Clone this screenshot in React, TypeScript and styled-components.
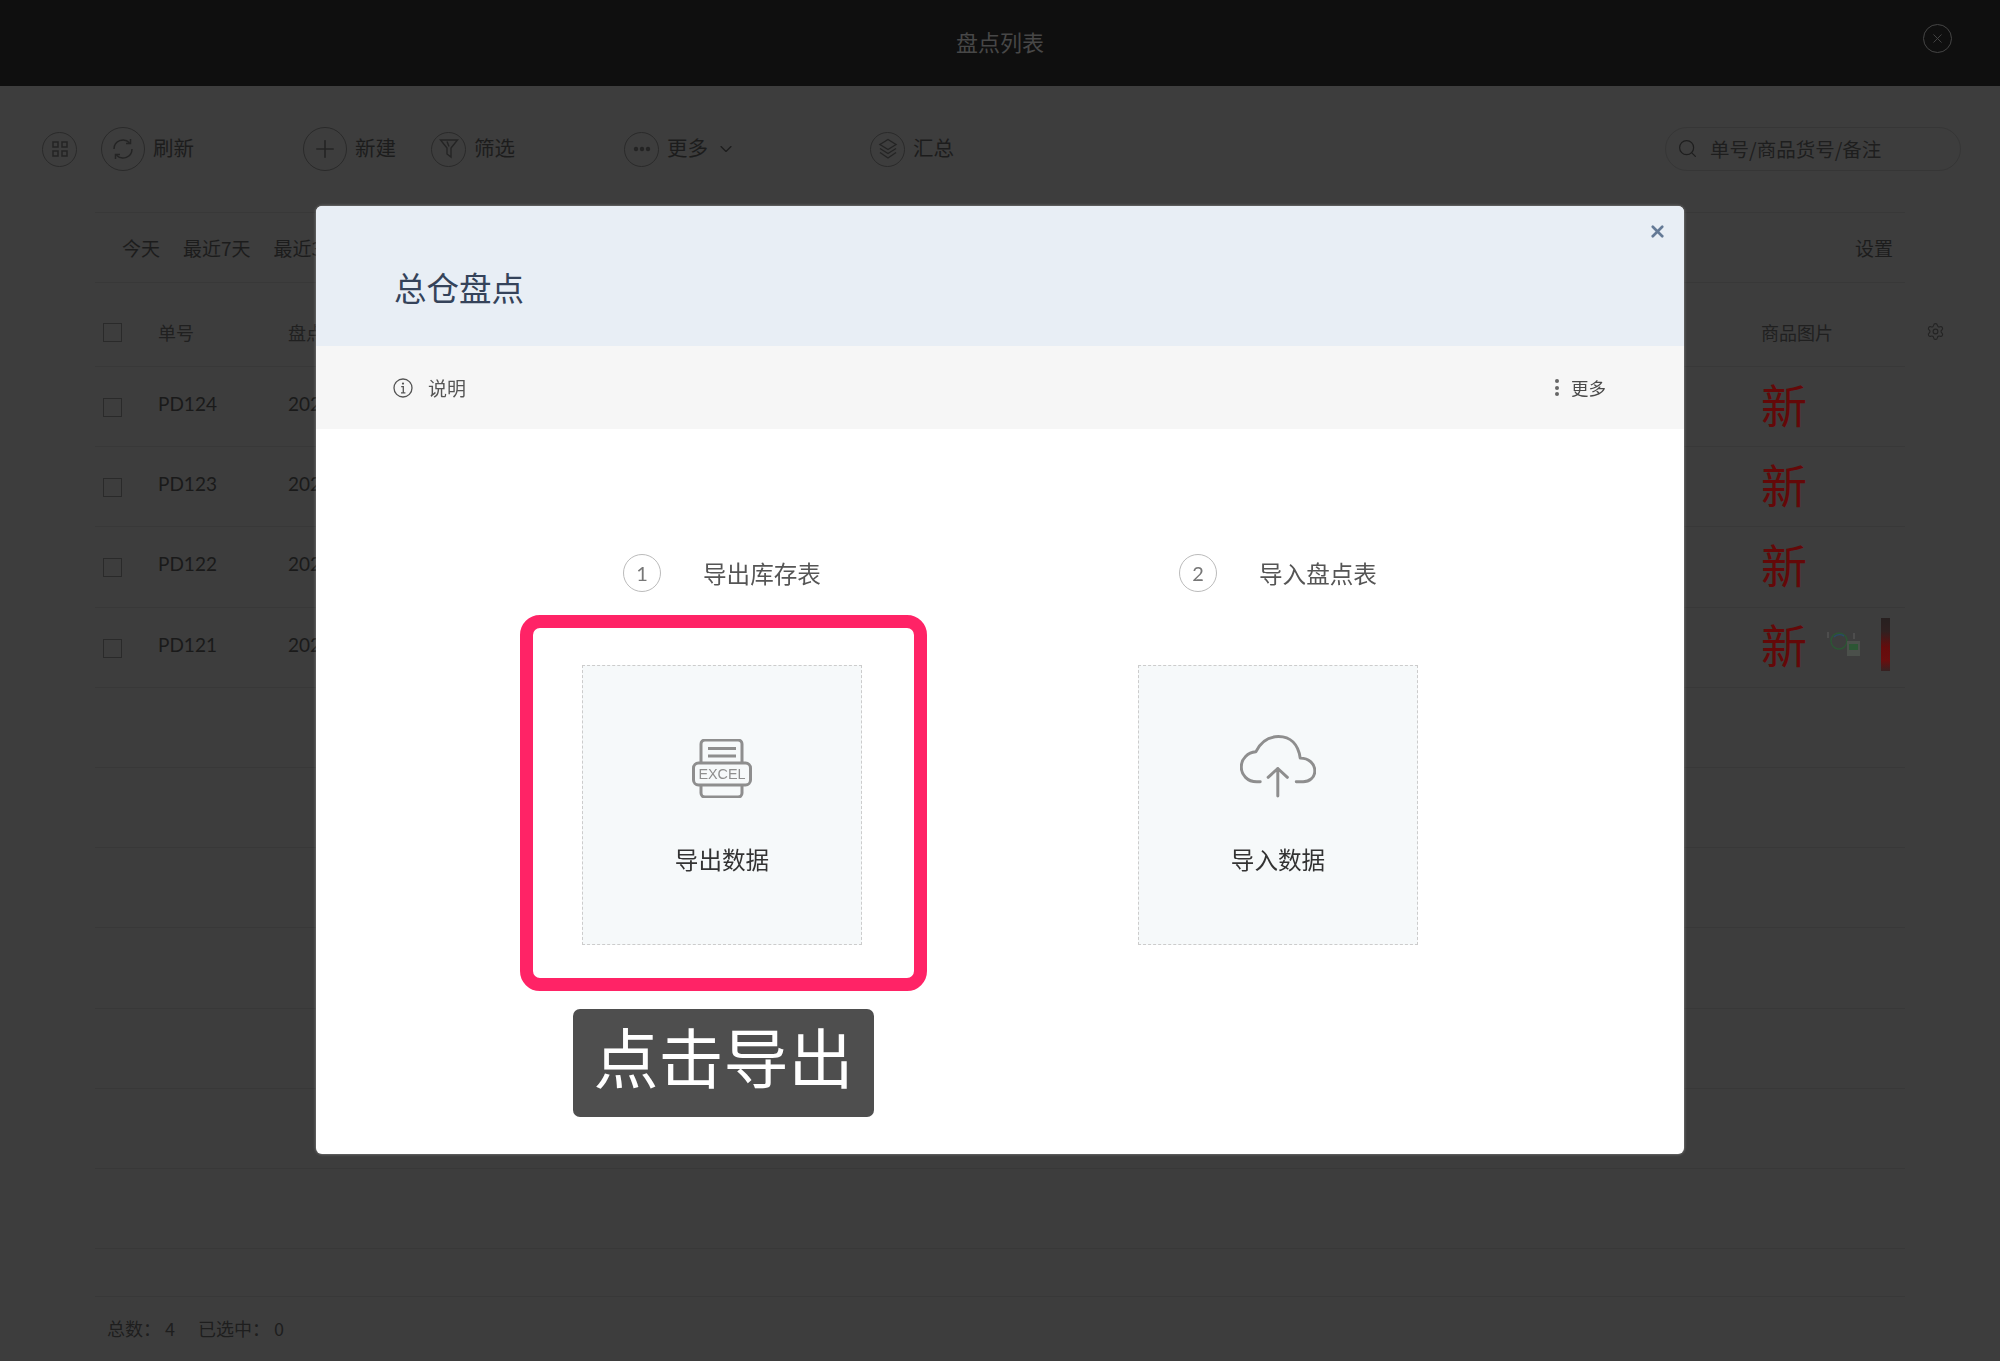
import styled, { createGlobalStyle } from "styled-components";
import { ChevronDown, Plus, Search, Settings, X } from "lucide-react";

const GlobalStyle = createGlobalStyle`
  html, body {
    margin: 0;
    padding: 0;
    width: 2000px;
    height: 1361px;
    overflow: hidden;
    background: #3d3d3d;
    font-family: "Noto Sans CJK SC", "Noto Sans", sans-serif;
  }
  * { box-sizing: border-box; }
`;

const Page = styled.div`
  width: 2000px;
  height: 1361px;
  display: flex;
  flex-direction: column;
  background: #3d3d3d;
  color: #1c1c1c;
`;

const TopBar = styled.header`
  height: 86px;
  flex: none;
  display: grid;
  grid-template-columns: 1fr auto 1fr;
  align-items: center;
  background: #0f0f0f;
`;

const TopTitle = styled.div`
  grid-column: 2;
  margin-bottom: 5px;
  font-size: 22px;
  color: #474747;
`;

const TopClose = styled.div`
  justify-self: end;
  width: 29px;
  height: 29px;
  margin: 0 48px 10px 0;
  border: 1.5px solid #454545;
  border-radius: 50%;
  display: flex;
  align-items: center;
  justify-content: center;
  color: #454545;
`;

const Toolbar = styled.div`
  height: 126px;
  flex: none;
  position: relative;
  padding-top: 41px;
  display: flex;
  align-items: flex-start;
`;

const ToolGroup = styled.div<{ $left: number }>`
  display: flex;
  align-items: center;
  height: 44px;
  margin-left: ${(p) => p.$left}px;
  gap: 8px;
`;

const RoundIcon = styled.div<{ $size?: number }>`
  width: ${(p) => p.$size ?? 35}px;
  height: ${(p) => p.$size ?? 35}px;
  flex: none;
  border: 1.5px solid #2a2a2a;
  border-radius: 50%;
  display: flex;
  align-items: center;
  justify-content: center;
  color: #242424;
`;

const ToolLabel = styled.span`
  padding-bottom: 3px;
  font-size: 20.5px;
  line-height: 41px;
  color: #1c1c1c;
  white-space: nowrap;
`;

const SearchBox = styled.div`
  margin-left: auto;
  margin-right: 39px;
  width: 296px;
  height: 44px;
  padding: 0 0 2px 11px;
  border: 1.5px solid #363636;
  border-radius: 22px;
  display: flex;
  align-items: center;
  gap: 12px;
  font-size: 19.5px;
  color: #1e1e1e;
`;

const TableArea = styled.div`
  margin: 0 95px;
  flex: 1;
  display: flex;
  flex-direction: column;
  border-top: 1px solid #383838;
`;

const QuickRow = styled.div`
  height: 70px;
  flex: none;
  display: flex;
  align-items: center;
  padding: 0 12px 0 27px;
  gap: 23px;
  font-size: 19px;
  color: #1c1c1c;
  border-bottom: 1px solid #383838;
`;

const QuickEnd = styled.span`
  margin-left: auto;
`;

const gridColumns = "55px 130px 1fr 144px";

const HeadRow = styled.div`
  height: 84px;
  flex: none;
  padding: 14px 0 0 8px;
  display: grid;
  grid-template-columns: ${gridColumns};
  align-items: center;
  font-size: 18px;
  color: #202020;
  border-bottom: 1px solid #383838;
`;

const Row = styled.div<{ $short?: boolean }>`
  height: ${(p) => (p.$short ? 48 : 80.2)}px;
  flex: none;
  padding-left: 8px;
  display: grid;
  grid-template-columns: ${gridColumns};
  align-items: center;
  font-family: Lato, "Noto Sans CJK SC", sans-serif;
  font-size: 19px;
  color: #1a1a1a;
  border-bottom: 1px solid #383838;
`;

const RowText = styled.span`
  margin-bottom: 6px;
`;

const Check = styled.span`
  width: 19px;
  height: 19px;
  margin-top: 2px;
  border: 1.5px solid #2a2a2a;
  display: block;
`;

const ImageHead = styled.div`
  display: flex;
  align-items: center;
  justify-content: space-between;
  margin-right: -40px;
`;

const ImageCell = styled.div`
  display: flex;
  align-items: center;
`;

const NewMark = styled.span`
  width: 46px;
  margin-bottom: 8px;
  font-family: "Noto Sans CJK SC", sans-serif;
  font-weight: 400;
  font-size: 46px;
  line-height: 46px;
  color: #640808;
`;

const Thumb = styled.svg`
  margin: 0 0 6px 18px;
  flex: none;
`;

const Strip = styled.span`
  width: 9px;
  height: 53px;
  margin: 0 0 6px 19px;
  background: linear-gradient(180deg, #272020 0%, #2f2020 25%, #650c0c 55%, #6a0e0e 80%, #352222 100%);
`;

const Footer = styled.div`
  flex: 1;
  display: flex;
  align-items: center;
  padding: 0 0 2px 12px;
  font-size: 18px;
  color: #1e1e1e;
  gap: 23px;
`;

const FooterItem = styled.span`
  display: flex;
  gap: 4px;
`;

const Overlay = styled.div`
  position: fixed;
  top: 0;
  left: 0;
  right: 0;
  bottom: 0;
  padding: 206px 0 0 316px;
`;

const Modal = styled.section`
  width: 1368px;
  height: 948px;
  background: #fff;
  border-radius: 6px;
  box-shadow: 0 0 3px rgba(255, 255, 255, 0.45);
  display: flex;
  flex-direction: column;
`;

const ModalHead = styled.div`
  height: 140px;
  flex: none;
  position: relative;
  display: flex;
  align-items: center;
  padding: 20px 0 0 78px;
  background: #e8eef5;
  border-radius: 6px 6px 0 0;
`;

const ModalTitle = styled.h2`
  margin: 0;
  font-size: 32.5px;
  font-weight: 400;
  color: #35435a;
`;

const ModalClose = styled.span`
  position: absolute;
  top: 16px;
  right: 17px;
  display: flex;
  color: #647a96;
`;

const InfoBar = styled.div`
  height: 83px;
  flex: none;
  display: flex;
  align-items: center;
  padding: 0 78px 0 77px;
  background: #f6f6f6;
  font-size: 19px;
  color: #555;
`;

const InfoLabel = styled.span`
  margin-left: 15px;
`;

const MoreButton = styled.span`
  margin-left: auto;
  display: flex;
  align-items: center;
  gap: 12px;
  font-size: 17.5px;
  color: #4a4a4a;
`;

const Dots = styled.span`
  width: 4px;
  display: flex;
  flex-direction: column;
  gap: 2.5px;

  i {
    width: 4px;
    height: 4px;
    border-radius: 50%;
    background: #666;
  }
`;

const Steps = styled.div`
  flex: 1;
  display: flex;
  padding: 125px 0 0 266px;
  gap: 276px;
`;

const StepColumn = styled.div`
  width: 280px;
`;

const StepHead = styled.div`
  height: 38px;
  margin-bottom: 73px;
  padding-left: 41px;
  display: flex;
  align-items: center;
  gap: 42px;
  font-size: 23.6px;
  color: #555;
  white-space: nowrap;
`;

const StepNumber = styled.span`
  width: 38px;
  height: 38px;
  flex: none;
  border: 1.5px solid #bbb;
  border-radius: 50%;
  display: flex;
  align-items: center;
  justify-content: center;
  font-family: Lato, sans-serif;
  font-size: 20px;
  color: #777;
`;

const DropCard = styled.div`
  position: relative;
  width: 280px;
  height: 280px;
  background: #f6f9fa;
  border: 1px dashed #cccccc;
  display: flex;
  flex-direction: column;
  align-items: center;
  padding-top: 70px;
`;

const CardIcon = styled.div`
  height: 62px;
  display: flex;
  align-items: flex-end;
  color: #8e8e8e;
`;

const CardLabel = styled.div`
  margin-top: 46px;
  font-size: 23.6px;
  line-height: 30px;
  color: #333;
`;

const Highlight = styled.div`
  position: absolute;
  top: -51px;
  left: -63px;
  width: 407px;
  height: 376px;
  border: 13px solid #ff2366;
  border-radius: 20px;
`;

const Caption = styled.div`
  position: absolute;
  top: 343px;
  left: -10px;
  width: 301px;
  height: 108px;
  background: #4e4e4e;
  border-radius: 7px;
  color: #fff;
  font-size: 65px;
  line-height: 92px;
  text-align: center;
`;

function GridIcon() {
  return (
    <svg width="16" height="16" viewBox="0 0 16 16" fill="none" stroke="currentColor" strokeWidth="1.5">
      <rect x="1" y="1" width="5" height="5" />
      <rect x="10" y="1" width="5" height="5" />
      <rect x="1" y="10" width="5" height="5" />
      <rect x="10" y="10" width="5" height="5" />
    </svg>
  );
}

function RefreshIcon() {
  return (
    <svg width="24" height="24" viewBox="0 0 24 24" fill="none" stroke="currentColor" strokeWidth="1.5">
      <path d="M3 12a9 9 0 0 1 15.5-6.2" />
      <path d="M21 12a9 9 0 0 1-15.5 6.2" />
      <path d="M19.5 2v4.5H15" />
      <path d="M4.5 22v-4.5H9" />
    </svg>
  );
}

function FunnelIcon() {
  return (
    <svg width="20" height="22" viewBox="0 0 20 22" fill="none" stroke="currentColor" strokeWidth="1.4">
      <path d="M1.5 2h17L12 10v9l-4-3v-6z" />
      <path d="M8 3.5l2 5" />
    </svg>
  );
}

function EllipsisIcon() {
  return (
    <svg width="18" height="6" viewBox="0 0 18 6" fill="currentColor">
      <circle cx="3" cy="3" r="2.2" />
      <circle cx="9" cy="3" r="2.2" />
      <circle cx="15" cy="3" r="2.2" />
    </svg>
  );
}

function LayersIcon() {
  return (
    <svg width="20" height="22" viewBox="0 0 20 22" fill="none" stroke="currentColor" strokeWidth="1.4">
      <path d="M10 1.5l8 5-8 5-8-5z" />
      <path d="M2 10.5l8 5 8-5" />
      <path d="M2 14.5l8 5.5 8-5.5" />
    </svg>
  );
}

function InfoIcon() {
  return (
    <svg width="20" height="20" viewBox="0 0 20 20" fill="none" stroke="#555" strokeWidth="1.3">
      <circle cx="10" cy="10" r="9" />
      <path d="M8.2 8.6H10.3V14.6M8 14.8H12.4" />
      <circle cx="10" cy="5.6" r="1.1" fill="#555" stroke="none" />
    </svg>
  );
}

function ExcelIcon() {
  return (
    <svg width="60" height="59" viewBox="0 0 60 59" fill="none" stroke="currentColor" strokeWidth="3">
      <path d="M9 23V5a4 4 0 0 1 4-4h33a4 4 0 0 1 4 4v18" />
      <path d="M16 9.5H44M16 17H44" />
      <rect x="1.5" y="24" width="57" height="22" rx="5" />
      <path d="M9 46v8a4 4 0 0 0 4 4h33a4 4 0 0 0 4-4v-8" />
      <text x="30" y="40.4" textAnchor="middle" fontFamily="'Liberation Sans', sans-serif" fontSize="14.4" fill="currentColor" stroke="none">
        EXCEL
      </text>
    </svg>
  );
}

function CloudUpIcon() {
  return (
    <svg width="76" height="63" viewBox="19 35 77 63" fill="none" stroke="currentColor" strokeWidth="3" strokeLinecap="round" strokeLinejoin="round">
      <path d="M39.5 82H36C26.5 82 20.3 75 20.3 67C20.3 58.5 27 52.3 35 51.6C40 41.5 48 36.2 58 36.2C70 36.2 78 44 80 58C89 58 94.8 64 94.8 71C94.8 78 89 82 83 82H76" />
      <path d="M57.3 96.5V68.5M47.5 77.5L57.3 68.5L67 77.5" />
    </svg>
  );
}

function ProductThumb() {
  return (
    <Thumb width="37" height="28" viewBox="0 0 37 28">
      <circle cx="14" cy="11" r="8" fill="none" stroke="#2c5634" strokeWidth="1.5" />
      <path d="M9 7a8 8 0 0 1 10-1" fill="none" stroke="#2a4a66" strokeWidth="1.5" />
      <rect x="22" y="11" width="13" height="15" fill="#4b504b" />
      <rect x="24" y="14" width="9" height="6" fill="#2c5634" />
      <rect x="2" y="2" width="2" height="6" fill="#4d4d4d" />
      <rect x="28" y="3" width="2" height="6" fill="#4d4d4d" />
    </Thumb>
  );
}

const rows = [
  { id: "PD124", extra: false },
  { id: "PD123", extra: false },
  { id: "PD122", extra: false },
  { id: "PD121", extra: true },
];
const emptyRows = [1, 2, 3, 4, 5, 6, 7];

export default function App() {
  return (
    <>
      <GlobalStyle />
      <Page>
        <TopBar>
          <TopTitle>盘点列表</TopTitle>
          <TopClose>
            <X size={15} strokeWidth={1.5} />
          </TopClose>
        </TopBar>

        <Toolbar>
          <ToolGroup $left={42}>
            <RoundIcon>
              <GridIcon />
            </RoundIcon>
          </ToolGroup>
          <ToolGroup $left={24}>
            <RoundIcon $size={44}>
              <RefreshIcon />
            </RoundIcon>
            <ToolLabel>刷新</ToolLabel>
          </ToolGroup>
          <ToolGroup $left={109}>
            <RoundIcon $size={44}>
              <Plus size={28} strokeWidth={1.4} />
            </RoundIcon>
            <ToolLabel>新建</ToolLabel>
          </ToolGroup>
          <ToolGroup $left={35}>
            <RoundIcon>
              <FunnelIcon />
            </RoundIcon>
            <ToolLabel>筛选</ToolLabel>
          </ToolGroup>
          <ToolGroup $left={109}>
            <RoundIcon>
              <EllipsisIcon />
            </RoundIcon>
            <ToolLabel>更多</ToolLabel>
            <ChevronDown size={20} strokeWidth={1.3} />
          </ToolGroup>
          <ToolGroup $left={134}>
            <RoundIcon>
              <LayersIcon />
            </RoundIcon>
            <ToolLabel>汇总</ToolLabel>
          </ToolGroup>
          <SearchBox>
            <Search size={21} strokeWidth={1.4} />
            单号/商品货号/备注
          </SearchBox>
        </Toolbar>

        <TableArea>
          <QuickRow>
            <span>今天</span>
            <span>最近7天</span>
            <span>最近30天</span>
            <QuickEnd>设置</QuickEnd>
          </QuickRow>
          <HeadRow>
            <Check />
            <span>单号</span>
            <span>盘点时间</span>
            <ImageHead>
              商品图片
              <Settings size={19} strokeWidth={1.4} color="#242424" />
            </ImageHead>
          </HeadRow>
          {rows.map((r) => (
            <Row key={r.id}>
              <Check />
              <RowText>{r.id}</RowText>
              <RowText>2021-06-18</RowText>
              <ImageCell>
                <NewMark>新</NewMark>
                {r.extra && (
                  <>
                    <ProductThumb />
                    <Strip />
                  </>
                )}
              </ImageCell>
            </Row>
          ))}
          {emptyRows.map((n) => (
            <Row key={n} />
          ))}
          <Row $short />
          <Footer>
            <FooterItem>
              <span>总数：</span>
              <span>4</span>
            </FooterItem>
            <FooterItem>
              <span>已选中：</span>
              <span>0</span>
            </FooterItem>
          </Footer>
        </TableArea>

        <Overlay>
          <Modal>
            <ModalHead>
              <ModalTitle>总仓盘点</ModalTitle>
              <ModalClose>
                <X size={19} strokeWidth={3.4} />
              </ModalClose>
            </ModalHead>
            <InfoBar>
              <InfoIcon />
              <InfoLabel>说明</InfoLabel>
              <MoreButton>
                <Dots>
                  <i />
                  <i />
                  <i />
                </Dots>
                更多
              </MoreButton>
            </InfoBar>
            <Steps>
              <StepColumn>
                <StepHead>
                  <StepNumber>1</StepNumber>
                  导出库存表
                </StepHead>
                <DropCard>
                  <CardIcon>
                    <ExcelIcon />
                  </CardIcon>
                  <CardLabel>导出数据</CardLabel>
                  <Highlight />
                  <Caption>点击导出</Caption>
                </DropCard>
              </StepColumn>
              <StepColumn>
                <StepHead>
                  <StepNumber>2</StepNumber>
                  导入盘点表
                </StepHead>
                <DropCard>
                  <CardIcon>
                    <CloudUpIcon />
                  </CardIcon>
                  <CardLabel>导入数据</CardLabel>
                </DropCard>
              </StepColumn>
            </Steps>
          </Modal>
        </Overlay>
      </Page>
    </>
  );
}
